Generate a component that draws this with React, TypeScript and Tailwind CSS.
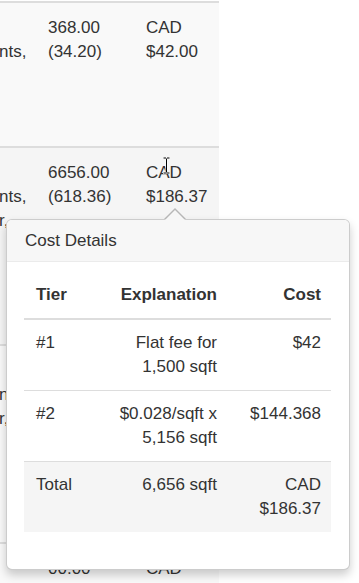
import React from "react";

const FONT = { fontFamily: '"Liberation Sans", Arial, Helvetica, sans-serif' };

type Row = {
  height: string;
  bg: string;
  lead: string[];
  qty: string[];
  price: string[];
};

// Background listing rows; the first column is scrolled past, only its tail shows.
const ROWS: Row[] = [
  { height: "h-[145px]", bg: "bg-[#f9f9f9]", lead: ["", "nts,"], qty: ["368.00", "(34.20)"], price: ["CAD", "$42.00"] },
  { height: "h-[198px]", bg: "bg-[#f5f5f5]", lead: ["", "nts,", "r,"], qty: ["6656.00", "(618.36)"], price: ["CAD", "$186.37"] },
  { height: "h-[198px]", bg: "bg-[#f9f9f9]", lead: ["", "n", "r,"], qty: ["", ""], price: ["", ""] },
  { height: "h-[60px]", bg: "bg-[#f9f9f9]", lead: [""], qty: ["00.00"], price: ["CAD"] },
];

const TIERS = [
  { tier: "#1", explanation: ["Flat fee for", "1,500 sqft"], cost: ["$42"] },
  { tier: "#2", explanation: ["$0.028/sqft x", "5,156 sqft"], cost: ["$144.368"] },
];

function Lines({ lines }: { lines: string[] }) {
  return (
    <>
      {lines.map((l, i) => (
        <div key={i} className="h-[24px] whitespace-nowrap">
          {l || "\u00a0"}
        </div>
      ))}
    </>
  );
}

function CostPopover() {
  return (
    <div className="absolute left-[6px] top-[219px] z-10 h-[351px] w-[344px] rounded-[6px] border border-[rgba(0,0,0,0.2)] bg-white shadow-[0_5px_10px_rgba(0,0,0,0.2)]">
      {/* arrow */}
      <div className="absolute -top-[12px] left-[157px] h-0 w-0 border-x-[11px] border-b-[11px] border-x-transparent border-b-[rgba(0,0,0,0.25)]" />
      <div className="absolute -top-[10px] left-[158px] h-0 w-0 border-x-[10px] border-b-[10px] border-x-transparent border-b-[#f7f7f7]" />

      <div className="h-[42px] rounded-t-[5px] border-b border-[#ebebeb] bg-[#f7f7f7] px-[18px] py-[9px] leading-[24px]">
        Cost Details
      </div>

      <div className="pl-[17px] pr-[18px] pt-[10px]">
        <table className="w-full table-fixed border-collapse leading-[24px]">
          <colgroup>
            <col className="w-[70px]" />
            <col className="w-[135px]" />
            <col />
          </colgroup>
          <thead>
            <tr className="border-b-2 border-[#dddddd] font-bold">
              <th className="py-[11px] pl-[12px] text-left">Tier</th>
              <th className="py-[11px] pr-[12px] text-right">Explanation</th>
              <th className="py-[11px] pr-[10px] text-right">Cost</th>
            </tr>
          </thead>
          <tbody>
            {TIERS.map((t) => (
              <tr key={t.tier} className="border-b border-[#dddddd] align-top">
                <td className="py-[11px] pl-[12px]">{t.tier}</td>
                <td className="py-[11px] pr-[12px] text-right">
                  <Lines lines={t.explanation} />
                </td>
                <td className="py-[11px] pr-[10px] text-right">
                  <Lines lines={t.cost} />
                </td>
              </tr>
            ))}
            <tr className="bg-[#f5f5f5] align-top">
              <td className="py-[11px] pl-[12px]">Total</td>
              <td className="py-[11px] pr-[12px] text-right">6,656 sqft</td>
              <td className="py-[11px] pr-[10px] text-right">
                <Lines lines={["CAD", "$186.37"]} />
              </td>
            </tr>
          </tbody>
        </table>
      </div>
    </div>
  );
}

function TextCursor() {
  return (
    <svg
      className="absolute left-[162px] top-[156px] z-20"
      width="9"
      height="19"
      viewBox="0 0 9 19"
      aria-hidden="true"
    >
      <path d="M1 1h3v0.5h1V1h3v2H5.5v13H8v2H5v-0.5H4V18H1v-2h2.5V3H1z" fill="#fff" />
      <path d="M1.5 1.5h2.5v1h1v-1h2.5v1H5v14h2.5v1H5v-1H4v1H1.5v-1H4v-14H1.5z" fill="#000" />
    </svg>
  );
}

export default function App() {
  return (
    <div className="relative h-[583px] w-[359px] overflow-hidden bg-white text-[17px] text-[#333333]" style={FONT}>
      <div className="w-[219px] pt-px">
        <div className="border-t-2 border-[#dddddd]">
          {ROWS.map((r, i) => (
            <div key={i} className={`flex ${r.height} ${r.bg} border-b-2 border-[#dddddd] pt-[13px] leading-[24px]`}>
              <div className="-ml-px w-[29px] shrink-0 overflow-hidden">
                <Lines lines={r.lead} />
              </div>
              <div className="ml-[20px] w-[98px] shrink-0">
                <Lines lines={r.qty} />
              </div>
              <div className="shrink-0">
                <Lines lines={r.price} />
              </div>
            </div>
          ))}
        </div>
      </div>
      <TextCursor />
      <CostPopover />
    </div>
  );
}
